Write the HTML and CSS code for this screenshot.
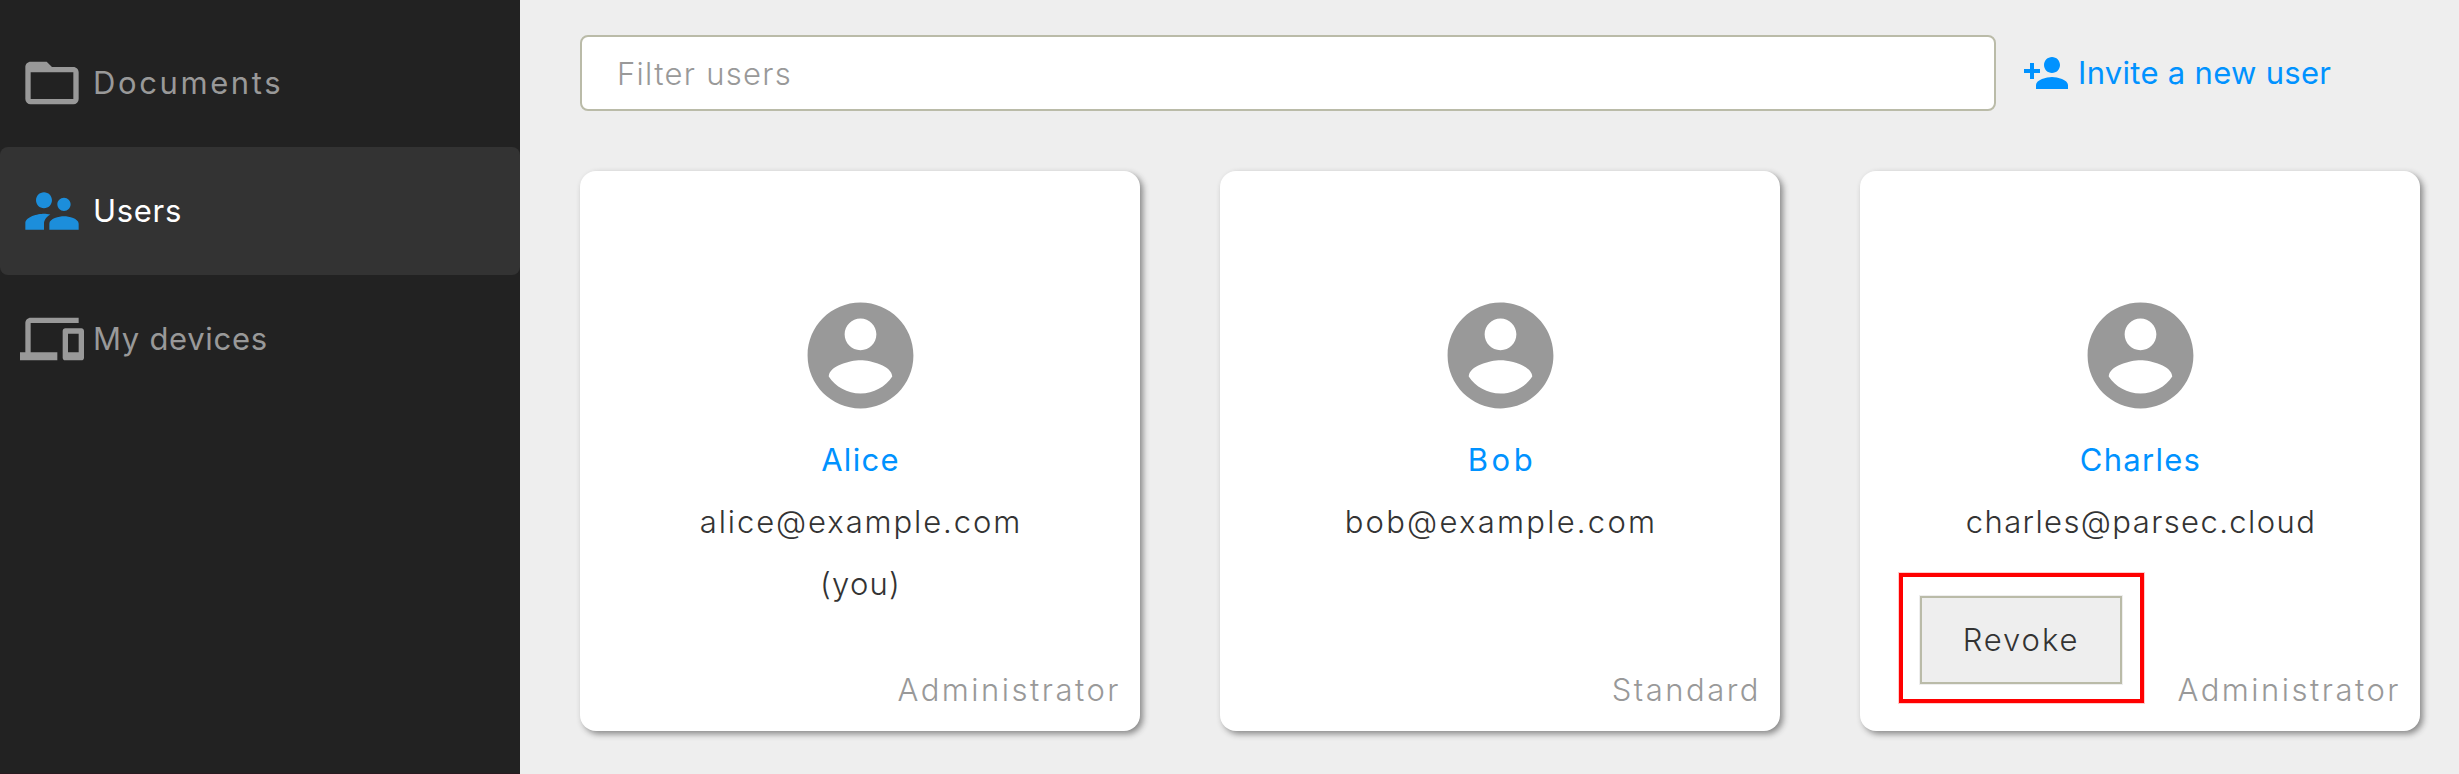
FILE: index.html
```html
<!DOCTYPE html>
<html lang="en">
<head>
<meta charset="utf-8">
<title>Users</title>
<link rel="stylesheet" href="styles.css">
</head>
<body>
<svg class="defs" aria-hidden="true">
  <symbol id="account" viewBox="0 0 24 24"><path d="M12 2C6.48 2 2 6.48 2 12s4.48 10 10 10 10-4.48 10-10S17.52 2 12 2zm0 3c1.66 0 3 1.34 3 3s-1.34 3-3 3-3-1.34-3-3 1.34-3 3-3zm0 14.2c-2.5 0-4.71-1.28-6-3.22.03-1.99 4-3.08 6-3.08 1.99 0 5.97 1.09 6 3.08-1.29 1.94-3.5 3.22-6 3.22z"/></symbol>
</svg>
<div class="app">
  <nav class="sidebar">
    <a class="nav-item">
      <svg class="nav-icon" viewBox="0 0 24 24"><path d="M20 18H4V8h16m0-2h-8l-2-2H4c-1.11 0-2 .89-2 2v12a2 2 0 0 0 2 2h16a2 2 0 0 0 2-2V8c0-1.11-.9-2-2-2z"/></svg>
      <span class="nav-label track-wide">Documents</span>
    </a>
    <a class="nav-item active">
      <svg class="nav-icon" viewBox="0 0 24 24"><path d="M16.5 12c1.38 0 2.49-1.12 2.49-2.5S17.88 7 16.5 7C15.12 7 14 8.12 14 9.5s1.12 2.5 2.5 2.5zM9 11c1.66 0 2.99-1.34 2.99-3S10.66 5 9 5C7.34 5 6 6.34 6 8s1.34 3 3 3zm7.5 3c-1.83 0-5.5.92-5.5 2.75V19h11v-2.25c0-1.83-3.67-2.75-5.5-2.75zM9 13c-2.33 0-7 1.17-7 3.5V19h7v-2.25c0-.85.33-2.34 2.37-3.47C10.5 13.1 9.66 13 9 13z"/></svg>
      <span class="nav-label">Users</span>
    </a>
    <a class="nav-item">
      <svg class="nav-icon" viewBox="0 0 24 24"><path d="M4 6h18V4H4c-1.1 0-2 .9-2 2v11H0v3h14v-3H4V6zm19 2h-6c-.55 0-1 .45-1 1v10c0 .55.45 1 1 1h6c.55 0 1-.45 1-1V9c0-.55-.45-1-1-1zm-1 9h-4v-7h4v7z"/></svg>
      <span class="nav-label">My devices</span>
    </a>
  </nav>
  <main class="main">
    <header class="toolbar">
      <input class="filter" type="text" placeholder="Filter users">
      <a class="invite">
        <svg class="invite-icon" viewBox="0 0 24 24"><path d="M15 12c2.21 0 4-1.79 4-4s-1.79-4-4-4-4 1.79-4 4 1.79 4 4 4zm-9-2V7H4v3H1v2h3v3h2v-3h3v-2H6zm9 4c-2.67 0-8 1.34-8 4v2h16v-2c0-2.66-5.33-4-8-4z"/></svg>
        <span class="invite-label">Invite a new user</span>
      </a>
    </header>
    <section class="cards">
      <article class="card alice">
        <svg class="avatar"><use href="#account"/></svg>
        <div class="name">Alice</div>
        <div class="email">alice@example.com</div>
        <div class="you">(you)</div>
        <footer class="card-footer"><span class="role">Administrator</span></footer>
      </article>
      <article class="card bob">
        <svg class="avatar"><use href="#account"/></svg>
        <div class="name">Bob</div>
        <div class="email">bob@example.com</div>
        <footer class="card-footer"><span class="role">Standard</span></footer>
      </article>
      <article class="card charles">
        <svg class="avatar"><use href="#account"/></svg>
        <div class="name">Charles</div>
        <div class="email">charles@parsec.cloud</div>
        <footer class="card-footer">
          <div class="highlight"><button class="revoke">Revoke</button></div>
          <span class="role">Administrator</span>
        </footer>
      </article>
    </section>
  </main>
</div>
</body>
</html>
```
FILE: styles.css
```css
* { box-sizing: border-box; }
body {
  margin: 0;
  font-family: Inter, "Open Sans", sans-serif;
  font-size: 31px;
  color: #333;
  background: #eee;
}
.defs { display: none; }
.app { display: flex; height: 774px; overflow: hidden; }

.sidebar {
  width: 520px;
  flex: none;
  padding-top: 19px;
  background: #222;
  border-bottom: 1px solid #281a1f;
}
.nav-item {
  display: flex;
  align-items: center;
  gap: 9px;
  height: 128px;
  padding-left: 20px;
  border-radius: 8px;
  color: #999;
  letter-spacing: 0.7px;
}
.nav-item.active { background: #333; color: #fff; }
.nav-icon { width: 64px; height: 64px; fill: currentColor; }
.active .nav-icon { fill: #1c8edb; }
.nav-label { padding-bottom: 2px; }
.track-wide { letter-spacing: 2.6px; }

.main { flex: 1; padding: 35px 39px 0 60px; }
.toolbar { display: flex; align-items: center; gap: 26px; height: 76px; }
.filter {
  width: 1416px;
  height: 76px;
  padding: 0 35px;
  border: 2px solid #babba8;
  border-radius: 8px;
  background: #fff;
  font: inherit;
  font-weight: 300;
  letter-spacing: 1.3px;
}
.filter::placeholder { color: #999; opacity: 1; }
.invite { display: flex; align-items: center; gap: 8px; color: #0092ff; letter-spacing: 0.3px; }
.invite-icon { width: 48px; height: 48px; fill: currentColor; }
.invite-label { padding-bottom: 2px; }

.cards { display: flex; gap: 80px; margin-top: 60px; }
.card {
  display: flex;
  flex-direction: column;
  align-items: center;
  width: 560px;
  height: 560px;
  padding-top: 121px;
  border-radius: 16px;
  background: #fff;
  box-shadow: 3px 3px 6px #888;
  font-weight: 300;
  line-height: 62px;
}
.avatar { width: 127px; height: 127px; margin-bottom: 10px; fill: #999; }
.name { padding-left: 1px; color: #0092ff; font-weight: 400; letter-spacing: 1.3px; }
.you { padding-left: 1px; letter-spacing: 1.2px; }
.email { padding-left: 2px; }
.alice .email { letter-spacing: 1.9px; }
.bob .name { padding-left: 4px; letter-spacing: 3.6px; }
.bob .email { letter-spacing: 2.25px; }
.charles .email { letter-spacing: 1.4px; }
.card-footer {
  display: flex;
  align-items: flex-end;
  width: 100%;
  margin-top: auto;
  padding: 0 19px 10px 39px;
}
.role { margin-left: auto; color: #999; letter-spacing: 2.5px; }
.highlight {
  width: 245px;
  height: 130px;
  margin-bottom: 18px;
  padding: 19px 18px 15px 17px;
  border: 4px solid #f00;
  box-shadow: 0 0 0 1px rgba(255, 0, 0, 0.2);
}
.revoke {
  display: block;
  width: 202px;
  height: 88px;
  padding: 0;
  border: 2px solid #babba8;
  background: #eee;
  box-shadow: 0 0 0 1px #eee;
  color: #333;
  font: inherit;
  letter-spacing: 1.9px;
}
```
